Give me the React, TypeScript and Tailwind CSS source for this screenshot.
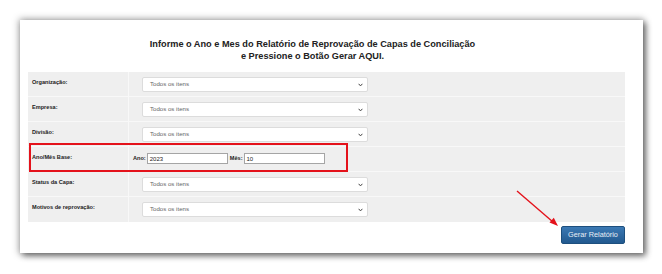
import React from 'react'

const font = { fontFamily: '"Liberation Sans", Arial, sans-serif' }

type Row = { label: string; kind: 'select' | 'period' }

const rows: Row[] = [
  { label: 'Organização:', kind: 'select' },
  { label: 'Empresa:', kind: 'select' },
  { label: 'Divisão:', kind: 'select' },
  { label: 'Ano/Mês Base:', kind: 'period' },
  { label: 'Status da Capa:', kind: 'select' },
  { label: 'Motivos de reprovação:', kind: 'select' },
]

function FakeSelect() {
  return (
    <div className="ml-[9px] mt-[5px] h-[15px] w-[226px] rounded-[2px] border border-[#dcdcdc] bg-white flex items-center justify-between pl-[7px] pr-[4px]">
      <span className="text-[6.1px] text-[#666] leading-none">Todos os itens</span>
      <svg width="5" height="4" viewBox="0 0 5 4">
        <path d="M0.6 0.8 L2.5 2.9 L4.4 0.8" fill="none" stroke="#444" strokeWidth="1" />
      </svg>
    </div>
  )
}

function Period() {
  return (
    <div className="mt-[6px] flex items-center">
      <span className="text-[5.6px] font-bold text-[#222] mr-[1px]">Ano:</span>
      <div className="h-[11px] w-[81px] border border-[#a5a5a5] bg-white flex items-center pl-[2px]">
        <span className="text-[6px] text-[#222] leading-none">2023</span>
      </div>
      <span className="text-[5.6px] font-bold text-[#222] ml-[2px] mr-[1px]">Mês:</span>
      <div className="h-[11px] w-[81px] border border-[#a5a5a5] bg-white flex items-center pl-[2px]">
        <span className="text-[6px] text-[#222] leading-none">10</span>
      </div>
    </div>
  )
}

export default function App() {
  return (
    <div className="relative w-[662px] h-[274px] bg-white overflow-hidden pt-[20px] pl-[20px]" style={font}>
      <div className="w-[623px] h-[233px] bg-white shadow-[0_0_7px_1px_rgba(0,0,0,0.35),3px_3px_6px_rgba(0,0,0,0.45)] flex flex-col">
        <div className="h-[52px] pt-[18px] pr-[38px] text-center text-[9.2px] leading-[12px] font-bold text-[#222]">
          <div>Informe o Ano e Mes do Relatório de Reprovação de Capas de Conciliação</div>
          <div>e Pressione o Botão Gerar AQUI.</div>
        </div>
        <div className="ml-[8px] w-[597px] bg-[#efefef]">
          {rows.map((r) => (
            <div key={r.label} className="flex h-[25px] border-b border-[#f8f8f8] last:border-b-0">
              <div className="w-[101px] border-r border-[#f8f8f8] pl-[4px] pt-[6px] text-[5.6px] font-bold text-[#222] leading-[8px]">
                {r.label}
              </div>
              <div className="flex-1 pl-[4px]">
                {r.kind === 'select' ? <FakeSelect /> : <Period />}
              </div>
            </div>
          ))}
        </div>
        <div className="flex justify-end pr-[18px] pt-[4px]">
          <button className="h-[18px] w-[64px] rounded-[2px] border border-[#1d4f7e] bg-gradient-to-b from-[#3b79b4] to-[#22598f] text-[7.3px] text-[#e8eef5] leading-none">
            Gerar Relatório
          </button>
        </div>
      </div>

      <div className="absolute left-[29px] top-[143px] w-[319px] h-[29px] border-2 border-[#e4121b]" />

      <svg className="absolute left-0 top-0" width="662" height="274" viewBox="0 0 662 274">
        <line x1="517" y1="191" x2="553" y2="222" stroke="#e4121b" strokeWidth="1.4" />
        <path d="M558 226 L549.5 222.6 L553.8 217.8 Z" fill="#e4121b" />
      </svg>
    </div>
  )
}
